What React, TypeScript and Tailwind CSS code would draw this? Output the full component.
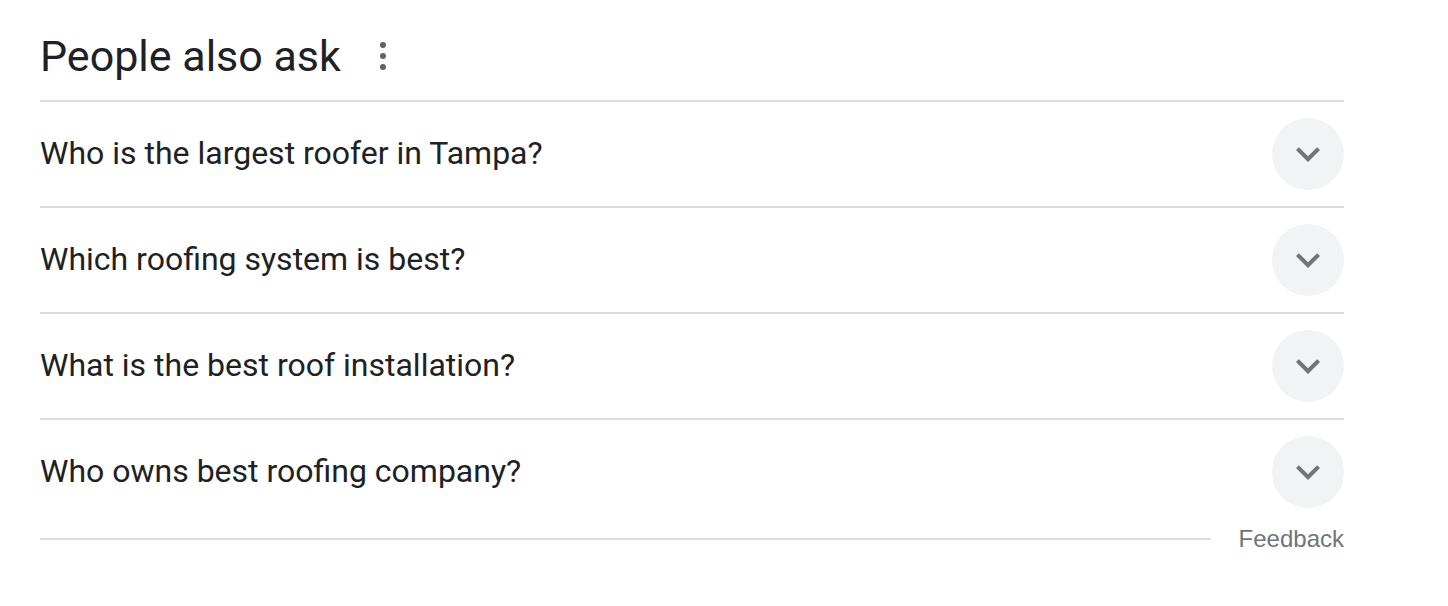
import React from "react";

const questions = [
  "Who is the largest roofer in Tampa?",
  "Which roofing system is best?",
  "What is the best roof installation?",
  "Who owns best roofing company?",
];

function Chevron() {
  return (
    <svg viewBox="0 0 24 24" className="w-[48px] h-[48px]" fill="#70757a">
      <path d="M16.59 8.59L12 13.17 7.41 8.59 6 10l6 6 6-6z" />
    </svg>
  );
}

function Dots() {
  return (
    <svg viewBox="0 0 6 30" className="w-[6px] h-[30px]" fill="#5f6368">
      <circle cx="3" cy="4" r="3" />
      <circle cx="3" cy="15" r="3" />
      <circle cx="3" cy="26" r="3" />
    </svg>
  );
}

export default function App() {
  return (
    <div className="min-h-screen bg-white font-['Roboto',sans-serif] text-[#202124]">
      <div className="ml-[40px] w-[1304px]">
        {/* header */}
        <div className="h-[100px] flex items-center gap-[36px] pt-[12px]">
          <h2 className="text-[43px] leading-[56px]">People also ask</h2>
          <button className="flex items-center justify-center w-[12px] h-[40px]">
            <Dots />
          </button>
        </div>

        {questions.map((q) => (
          <div
            key={q}
            className="h-[106px] border-t-2 border-[#dadce0] flex items-center justify-between"
          >
            <span className="text-[32px] leading-[40px] -mt-[3px]">{q}</span>
            <div className="w-[72px] h-[72px] rounded-full bg-[#f1f3f4] flex items-center justify-center -mt-[1px]">
              <Chevron />
            </div>
          </div>
        ))}

        {/* footer */}
        <div className="flex items-center gap-[28px] h-[30px]">
          <div className="flex-1 h-[2px] bg-[#dadce0]" />
          <span className="font-['Liberation_Sans',Arial,sans-serif] text-[24px] leading-[30px] text-[#70757a]">
            Feedback
          </span>
        </div>
      </div>
    </div>
  );
}
